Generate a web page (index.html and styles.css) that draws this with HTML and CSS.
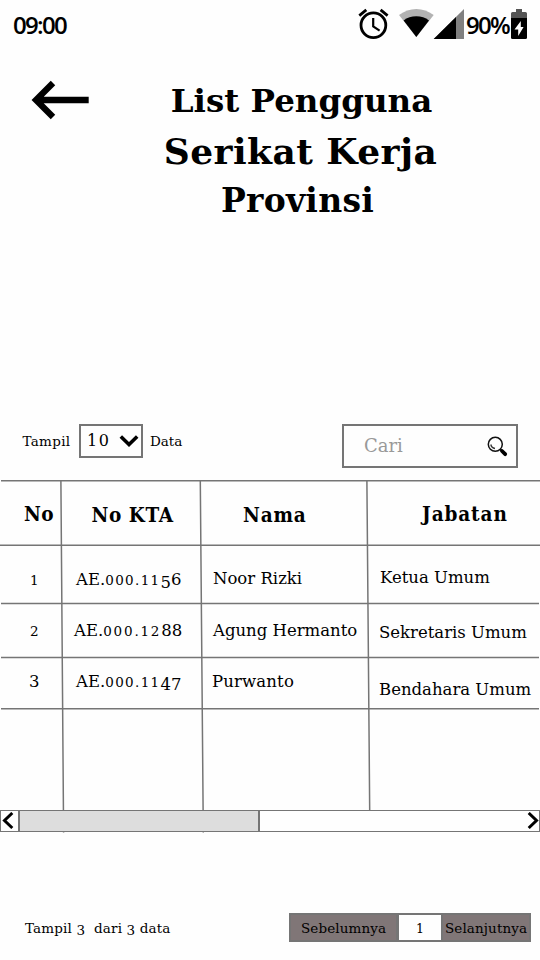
FILE: index.html
```
<!DOCTYPE html>
<html lang="id">
<head>
<meta charset="utf-8">
<title>List Pengguna Serikat Kerja Provinsi</title>
<link rel="stylesheet" href="styles.css">
</head>
<body>
<div class="status">
  <span class="clock">09:00</span>
  <svg class="status-icons" width="106" height="34" viewBox="358 7 106 34">
    <g fill="none" stroke="#000">
      <circle cx="373.4" cy="25.3" r="12.4" stroke-width="2.8"/>
      <path d="M359.3 15.6L366.3 9.9M380.6 9.9L387.6 15.6" stroke-width="2.8"/>
      <path d="M373.2 18V26.5L379.6 30.6" stroke-width="2.2"/>
    </g>
    <path d="M416.3 37L399 15Q407 9 416.3 9T433.7 15Z" fill="#b2b2b2"/>
    <path d="M416.3 37L403.6 20.5Q409 16.3 416.3 16.3T429 20.5Z"/>
    <path d="M433.7 39L464 9V39Z" fill="#808080"/>
    <path d="M433.7 39L456 17V39Z"/>
  </svg>
  <span class="percent">90%</span>
  <svg class="battery" width="16" height="30" viewBox="0 0 16 30">
    <path d="M5 0H11V3H14.5Q16 3 16 4.500V9H0V4.500Q0 3 1.500 3H5Z" fill="#555"/>
    <path d="M0 9H16V28.500Q16 30 14.500 30H1.500Q0 30 0 28.500Z"/>
    <path d="M9.800 12L3.500 20.500H7.200V27L12.600 18H9.800Z" fill="#fff"/>
  </svg>
</div>

<header class="header">
  <svg class="back" width="58" height="40" viewBox="31 80 58 40">
    <path d="M53 83L36 100L53 117M36 100H88.700" fill="none" stroke="#000" stroke-width="6.300"/>
  </svg>
  <h1 class="title">
    <span class="t1">List Pengguna</span>
    <span class="t2">Serikat Kerja</span>
    <span class="t3">Provinsi</span>
  </h1>
</header>

<div class="tools">
  <span class="label tampil">Tampil</span>
  <div class="select">
    <span class="select-value">10</span>
    <svg width="20" height="14" viewBox="0 0 20 14"><path d="M1.800 2.500L10 10.500L18.200 2.500" fill="none" stroke="#000" stroke-width="3.600"/></svg>
  </div>
  <span class="label data">Data</span>
  <div class="search">
    <span class="placeholder">Cari</span>
    <svg width="21" height="21" viewBox="0 0 21 21">
      <circle cx="8.300" cy="8.300" r="7" fill="none" stroke="#111" stroke-width="1.500"/>
      <path d="M3.800 8.500Q4.500 12 8 12.500" fill="none" stroke="#333" stroke-width="1.300"/>
      <path d="M12.800 13L15 15" stroke="#111" stroke-width="1.800"/>
      <path d="M15 15L18.200 18.200" stroke="#000" stroke-width="3.800" stroke-linecap="round"/>
    </svg>
  </div>
</div>

<div class="table">
  <svg class="rules" width="540" height="353" viewBox="0 480 540 353">
    <g fill="none" stroke="#757575" stroke-width="1.500">
      <path d="M1 480.800H540M0 545.200H540M1 603.600H539M1 657.600H539M1 708.800H539"/>
      <path d="M60.900 481L63.600 832.500M200.300 481L203.300 832.500M366.900 481L369.700 811"/>
    </g>
  </svg>
  <div class="row head">
    <span class="c-no">No</span><span class="c-kta">No KTA</span><span class="c-nama">Nama</span><span class="c-jab">Jabatan</span>
  </div>
  <div class="row r1">
    <span class="c-no"><span class="low">1</span></span><span class="c-kta">AE.<span class="low">000.11</span><span class="drop">5</span>6</span><span class="c-nama">Noor Rizki</span><span class="c-jab">Ketua Umum</span>
  </div>
  <div class="row r2">
    <span class="c-no"><span class="low">2</span></span><span class="c-kta">AE.<span class="low">000.12</span>88</span><span class="c-nama">Agung Hermanto</span><span class="c-jab">Sekretaris Umum</span>
  </div>
  <div class="row r3">
    <span class="c-no">3</span><span class="c-kta">AE.<span class="low">000.11</span><span class="drop">47</span></span><span class="c-nama">Purwanto</span><span class="c-jab">Bendahara Umum</span>
  </div>
</div>

<div class="scrollbar">
  <span class="scroll-btn"><svg width="13" height="18" viewBox="0 0 13 18"><path d="M11.300 1L3.500 8.500L11.300 16" fill="none" stroke="#000" stroke-width="3"/></svg></span>
  <span class="thumb"></span>
  <span class="scroll-btn right"><svg width="13" height="18" viewBox="0 0 13 18"><path d="M2.700 1L10.500 8.500L2.700 16" fill="none" stroke="#000" stroke-width="3"/></svg></span>
</div>

<footer class="footer">
  <span class="summary">Tampil <span class="drop">3</span>&nbsp; dari <span class="drop">3</span> data</span>
  <div class="pager">
    <span class="page prev">Sebelumnya</span>
    <span class="page current">1</span>
    <span class="page next">Selanjutnya</span>
  </div>
</footer>
</body>
</html>
```
FILE: styles.css
```
* { box-sizing: border-box; }
body {
  margin: 0;
  width: 540px;
  height: 960px;
  overflow: hidden;
  display: flex;
  flex-direction: column;
  background: #fefefe;
  color: #000;
  font-family: "DejaVu Serif", serif;
}
svg { display: block; flex: none; }
span { white-space: nowrap; }

.status {
  height: 50px;
  display: flex;
  align-items: center;
  padding-left: 13px;
  font: 600 24px/30px "Open Sans", sans-serif;
}
.clock { width: 345px; letter-spacing: -1.7px; }
.status-icons { margin-top: -2px; }
.percent { width: 45px; margin-left: 2px; letter-spacing: -1.7px; }
.battery { margin-top: -2px; }

.header { display: flex; height: 374px; padding: 26px 0 0 31px; }
.back { margin-top: 4px; }
.title {
  margin: 0 0 0 62px;
  width: 299px;
  height: 150px;
  display: flex;
  flex-direction: column;
  align-items: center;
  font-size: 32.5px;
  line-height: 50px;
}
.title span { flex: none; height: 50px; }
.title .t1 { margin-left: 2px; }
.title .t2 { font-size: 36px; letter-spacing: .45px; }
.title .t3 { font-size: 33px; letter-spacing: .25px; margin-left: -6px; }

.tools { display: flex; height: 56px; padding-left: 22px; }
.label { flex: none; font-size: 13.5px; line-height: 20px; margin-top: 7px; }
.tampil { width: 57px; padding-left: .5px; letter-spacing: .3px; }
.select {
  flex: none;
  width: 64px;
  height: 34px;
  border: 2px solid #757575;
  display: flex;
  align-items: center;
  padding-left: 6px;
}
.select-value { width: 32px; font-size: 16px; letter-spacing: 1.5px; line-height: 28px; }
.data { width: 199px; padding-left: 7px; }
.search {
  flex: none;
  width: 176px;
  height: 44px;
  border: 2px solid #757575;
  display: flex;
  padding: 10px 0 0 20px;
  line-height: 20px;
  color: #999;
}
.placeholder { width: 123px; font-size: 18px; }

.table { position: relative; height: 330px; }
.rules { position: absolute; left: 0; top: 0; z-index: 1; }
.row {
  display: grid;
  grid-template-columns: 61px 140px 167px 172px;
  height: 54px;
  font-size: 16.5px;
  line-height: 20px;
}
.head {
  height: 65px;
  padding-top: 22px;
  font: bold 20.5px/24px "DejaVu Serif Condensed", "DejaVu Serif", serif;
  letter-spacing: .6px;
}
.head .c-no { padding-left: 24px; letter-spacing: .3px; }
.head .c-kta { padding: 1px 0 0 30.5px; }
.head .c-nama { padding: 1px 0 0 42px; letter-spacing: .8px; }
.head .c-jab { padding-left: 54px; letter-spacing: .9px; }
.c-no { padding-left: 29px; }
.c-no .low { padding-left: 1px; }
.c-kta { padding-left: 15px; }
.c-nama { padding-left: 12px; }
.c-jab { padding-left: 12px; }
.r1 { height: 59px; padding-top: 25px; }
.r1 .c-nama, .r1 .c-jab { margin-top: -1px; }
.r1 .c-jab { margin-top: -2px; }
.r2 { padding-top: 17px; }
.r2 .c-kta { padding-left: 13px; }
.r2 .c-jab { padding: 2px 0 0 11px; }
.r3 { height: 51px; padding-top: 14px; }
.r3 .c-nama { padding-left: 11px; letter-spacing: .15px; }
.r3 .c-jab { padding: 8px 0 0 11px; }
.low { font-size: 13.5px; letter-spacing: 1.35px; }
.r2 .c-kta .low { letter-spacing: 1.8px; }
.drop { position: relative; top: 3px; }

.scrollbar {
  height: 22px;
  display: flex;
  border: 1.5px solid #757575;
  background: #fefefe;
}
.scroll-btn { width: 17px; padding-top: 1px; }
.scroll-btn.right { width: 13px; margin-left: auto; }
.thumb { width: 242px; background: #ddd; border: solid #757575; border-width: 0 2px; }
.table + .scrollbar { position: relative; z-index: 2; }

.footer { display: flex; margin-top: 81px; font-size: 13.5px; line-height: 20px; }
.summary { width: 289px; padding: 5px 0 0 25px; letter-spacing: .15px; }
.pager { display: flex; height: 29px; line-height: 26px; }
.page { border: 2px solid #757575; background: #807677; }
.prev { width: 109px; padding-left: 10px; letter-spacing: .1px; }
.current { width: 44px; background: #fefefe; border-width: 2px 1px; text-align: center; font-size: 12.5px; line-height: 27px; }
.next { width: 89px; padding-left: 2px; border-left-width: 1px; letter-spacing: .1px; }
.summary .drop { top: 2px; }
```
